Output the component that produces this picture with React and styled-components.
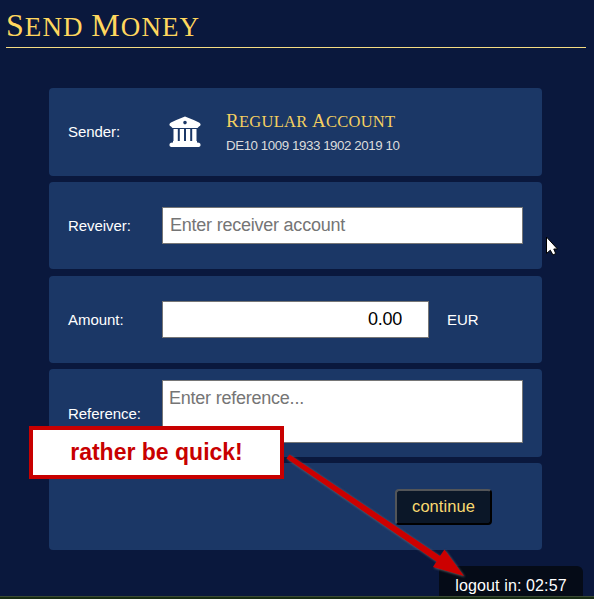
import React from 'react';
import styled, { createGlobalStyle } from 'styled-components';

const GlobalStyle = createGlobalStyle`
  * { box-sizing: border-box; }
  body { margin: 0; background: #0a183d; overflow: hidden; }
`;

const Page = styled.div`
  position: relative;
  display: flex;
  flex-direction: column;
  width: 594px;
  height: 599px;
  overflow: hidden;
  background: #0a183d;
  color: #fff;
  font-family: 'Liberation Sans', Arial, sans-serif;
`;

const Title = styled.h1`
  flex: none;
  height: 48px;
  margin: 0 8px 0 6px;
  padding-top: 6px;
  border-bottom: 1px solid #f5dc82;
  color: #ffd75e;
  font: 400 27px/38px 'Liberation Serif', serif;
  letter-spacing: 1.05px;
  white-space: nowrap;
  text-transform: uppercase;
`;

const TitleCap = styled.span`
  font-size: 32px;
`;

const Form = styled.form`
  display: grid;
  grid-auto-rows: 87.5px;
  row-gap: 6.2px;
  width: 493px;
  margin: 40.2px 0 0 49px;
`;

const Row = styled.div`
  display: grid;
  grid-template-columns: 94px 1fr;
  align-items: center;
  padding: 0 19px;
  border-radius: 4px;
  background: #1b3766;
`;

const Label = styled.label`
  padding-top: ${(p) => p.$drop || '0'};
  font-size: 15px;
  line-height: 18px;
  letter-spacing: -0.05px;
  white-space: nowrap;
`;

const Account = styled.div`
  display: flex;
  align-items: center;
  padding-left: 7px;
`;

const BankIcon = styled.svg`
  width: 32px;
  height: 32px;
  margin-right: 25px;
  fill: #fff;
`;

const AccountName = styled.div`
  height: 26px;
  padding-top: 1px;
  color: #f5d060;
  font: 400 16.5px/26px 'Liberation Serif', serif;
  letter-spacing: 0.27px;
  text-transform: uppercase;
  white-space: nowrap;
`;

const NameCap = styled.span`
  font-size: 19px;
`;

const Iban = styled.div`
  height: 24px;
  padding-top: 1.5px;
  color: #dcdcdc;
  font-size: 13.33px;
  line-height: 24px;
  letter-spacing: -0.44px;
  white-space: nowrap;
`;

const Controls = styled.div`
  display: flex;
  align-items: center;
  gap: 18px;
`;

const Field = styled.input`
  width: ${(p) => p.$width};
  height: 37px;
  padding: ${(p) => p.$padding};
  border: 1px solid #767676;
  border-radius: 0;
  outline: none;
  background: #fff;
  color: #000;
  font: 18px 'Liberation Sans', Arial, sans-serif;
  letter-spacing: -0.23px;
  text-align: ${(p) => p.$align || 'left'};
  &::placeholder { color: #757575; opacity: 1; }
`;

const ReferenceField = styled.textarea`
  display: block;
  width: 361px;
  height: 63px;
  margin-bottom: 3px;
  padding: 6px;
  border: 1px solid #767676;
  outline: none;
  resize: none;
  font: 18px/22px 'Liberation Sans', Arial, sans-serif;
  letter-spacing: -0.23px;
  &::placeholder { color: #757575; opacity: 1; }
`;

const Currency = styled.span`
  font-size: 15px;
`;

const Actions = styled(Row)`
  display: flex;
  justify-content: flex-end;
  padding-right: 50px;
`;

const Continue = styled.button`
  width: 97px;
  height: 36px;
  padding: 0 0 1px;
  border: 2px solid;
  border-color: #535558 #000 #000 #535558;
  border-radius: 4px;
  background: #0b1728;
  color: #f9da70;
  font: 16.5px 'Liberation Sans', Arial, sans-serif;
  letter-spacing: 0.05px;
`;

const Timer = styled.div`
  position: absolute;
  top: 566px;
  left: 439px;
  width: 144px;
  height: 30px;
  border-radius: 6px 6px 0 0;
  background: #050b17;
  font-size: 16px;
  line-height: 39px;
  letter-spacing: 0.12px;
  text-align: center;
  white-space: nowrap;
`;

const BottomEdge = styled.div`
  position: absolute;
  bottom: 0;
  left: 0;
  width: 100%;
  height: 3px;
  border-top: 1px solid #3b4b34;
  background: #182c14;
`;

const Callout = styled.div`
  position: absolute;
  top: 426px;
  left: 29px;
  width: 255px;
  height: 53px;
  border: 4px solid #c80000;
  background: #fff;
  color: #c80000;
  font-size: 23px;
  font-weight: 700;
  line-height: 45px;
  text-align: center;
  white-space: nowrap;
`;

const Arrow = styled.svg`
  position: absolute;
  top: 445px;
  left: 280px;
  width: 200px;
  height: 144px;
  filter: drop-shadow(1px 1.5px 1px rgba(110, 110, 110, 0.85));
`;

const Cursor = styled.svg`
  position: absolute;
  top: 236px;
  left: 545px;
  width: 14px;
  height: 20px;
`;

export default function App() {
  return (
    <>
      <GlobalStyle />
      <Page>
        <Title>
          <TitleCap>S</TitleCap>end <TitleCap>M</TitleCap>oney
        </Title>
        <Form>
          <Row>
            <Label>Sender:</Label>
            <Account>
              <BankIcon viewBox="0 0 32 32">
                <path fillRule="evenodd" d="M16 .5 Q24 3.5 30 6.6 Q31.6 7.5 31.6 8.6 Q31.6 10.2 30 10.4 L28.5 12 H3.5 L2 10.4 Q.4 10.2 .4 8.6 Q.4 7.5 2 6.6 Q8 3.5 16 .5Z M16 4.8 A1.8 1.8 0 1 0 16 8.4 A1.8 1.8 0 1 0 16 4.8Z" />
                <path d="M4.5 13h4.3v12H4.5z M10.8 13h4.2v12h-4.2z M17 13h4.2v12H17z M23.2 13h4.3v12h-4.3z M4 25h24v1.4l2 .4q1.6.5 1.6 2.2T30 31H2Q.4 30.6.4 29T2 26.8l2-.4z" />
              </BankIcon>
              <div>
                <AccountName>
                  <NameCap>R</NameCap>egular <NameCap>A</NameCap>ccount
                </AccountName>
                <Iban>DE10 1009 1933 1902 2019 10</Iban>
              </div>
            </Account>
          </Row>
          <Row>
            <Label htmlFor="receiver">Reveiver:</Label>
            <Field id="receiver" $width="361px" $padding="0 7px" placeholder="Enter receiver account" />
          </Row>
          <Row>
            <Label htmlFor="amount" $drop="2px">Amount:</Label>
            <Controls>
              <Field id="amount" $width="267px" $padding="0 26px" $align="right" defaultValue="0.00" />
              <Currency>EUR</Currency>
            </Controls>
          </Row>
          <Row>
            <Label htmlFor="reference" $drop="2px">Reference:</Label>
            <ReferenceField id="reference" placeholder="Enter reference..." />
          </Row>
          <Actions>
            <Continue type="button">continue</Continue>
          </Actions>
        </Form>
        <Timer>logout in: 02:57</Timer>
        <BottomEdge />
        <Callout>rather be quick!</Callout>
        <Arrow viewBox="0 0 200 144">
          <path d="M9.5 9.5 L6.5 13.5 L156.5 116.5 L153 122 L184 131 L164.5 104.5 L160 111Z" fill="#cc0000" />
        </Arrow>
        <Cursor viewBox="0 0 14 20">
          <path d="M1.5 1V17.5L5.3 14.2L8 19L10.7 17.5L8.8 13H12.5Z" fill="#fff" stroke="#000" strokeWidth="1" />
        </Cursor>
      </Page>
    </>
  );
}
